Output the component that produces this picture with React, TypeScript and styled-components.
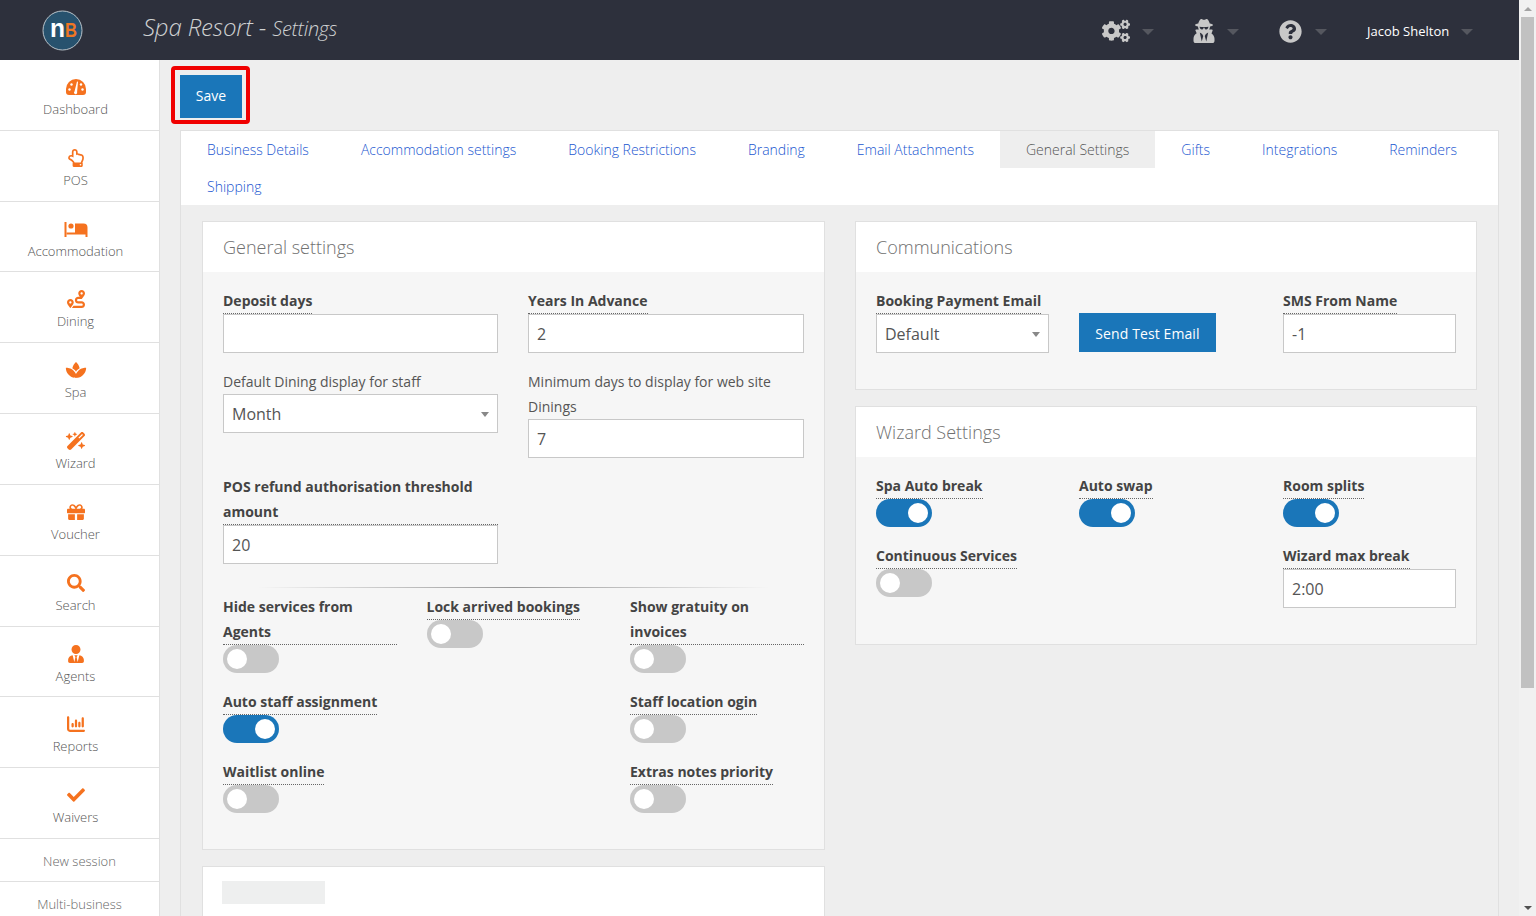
import styled, { createGlobalStyle } from "styled-components";
import type { ReactNode } from "react";
import {
  FaCheck,
  FaCogs,
  FaGift,
  FaQuestionCircle,
  FaRegHandPointUp,
  FaRoute,
  FaSearch,
  FaSpa,
  FaUserSecret,
  FaUserTie,
} from "react-icons/fa";
import { FaChartColumn, FaWandMagicSparkles } from "react-icons/fa6";

const GlobalStyle = createGlobalStyle`
  html, body {
    margin: 0;
    height: 100%;
    overflow: hidden;
  }
  body {
    font-family: "Open Sans", "Liberation Sans", sans-serif;
    color: #555;
    background: #eee;
  }
  * {
    box-sizing: border-box;
  }
`;

const Page = styled.div`
  display: flex;
  width: 1536px;
  height: 916px;
  overflow: hidden;
`;

const Viewport = styled.div`
  flex: 1;
  min-width: 0;
  display: flex;
  flex-direction: column;
`;

const Scrollbar = styled.div`
  width: 17px;
  display: flex;
  flex-direction: column;
  align-items: center;
  background: #f1f1f1;
`;

const ScrollArrow = styled.div<{ $down?: boolean }>`
  height: 17px;
  width: 100%;
  display: flex;
  align-items: center;
  justify-content: center;
  &::before {
    content: "";
    border-left: 4px solid transparent;
    border-right: 4px solid transparent;
    ${(p) =>
      p.$down ? "border-top: 4px solid #505050;" : "border-bottom: 4px solid #a3a3a3;"}
  }
`;

const ScrollThumb = styled.div`
  width: 13px;
  height: 671px;
  background: #c1c1c1;
`;

const ScrollGap = styled.div`
  flex: 1;
`;

const Header = styled.header`
  height: 60px;
  flex: none;
  display: flex;
  align-items: center;
  background: #2d303c;
`;

const LogoCell = styled.div`
  width: 143px;
  padding-left: 42px;
  display: flex;
  align-items: center;
`;

const Title = styled.div`
  margin-bottom: 8px;
  font-size: 24px;
  font-style: italic;
  font-weight: 300;
  letter-spacing: -0.15px;
  color: #cfd1d2;
  small {
    font-size: 20px;
    letter-spacing: -0.3px;
  }
`;

const HeaderTools = styled.div`
  margin-left: auto;
  padding-top: 2px;
  display: flex;
  align-items: center;
  color: #c8c8c8;
`;

const ToolButton = styled.div<{ $w: number }>`
  width: ${(p) => p.$w}px;
  display: flex;
  align-items: center;
`;

const CogIcon = styled(FaCogs)`
  margin-left: 1px;
`;

const ToolCaret = styled.span<{ $gap: number }>`
  margin-left: ${(p) => p.$gap}px;
  margin-top: 2px;
  border-left: 6px solid transparent;
  border-right: 6px solid transparent;
  border-top: 6px solid #55575f;
`;

const UserName = styled.span`
  font-size: 13px;
  color: #fff;
`;

const Body = styled.div`
  flex: 1;
  min-height: 0;
  display: flex;
`;

const Sidebar = styled.nav`
  width: 160px;
  flex: none;
  background: #fff;
  border-right: 1px solid #e0e0e0;
  overflow: hidden;
`;

const NavItem = styled.a`
  height: 70.83px;
  display: flex;
  flex-direction: column;
  align-items: center;
  padding: 18px 8px 0 0;
  border-bottom: 1px solid #e0e0e0;
  font-size: 13px;
  font-weight: 300;
  line-height: 17px;
  color: #555;
  svg {
    height: 18px;
    width: 24px;
    color: #f5721f;
    margin-bottom: 5px;
  }
`;

const NavPlain = styled.a`
  height: 43px;
  display: flex;
  align-items: center;
  justify-content: center;
  padding-top: 1px;
  border-bottom: 1px solid #e0e0e0;
  font-size: 13px;
  font-weight: 300;
  color: #666;
`;

const Main = styled.main`
  flex: 1;
  min-width: 0;
  display: flex;
  flex-direction: column;
  padding: 6px 20px 0 11px;
  background: #eee;
`;

const SaveHighlight = styled.div`
  width: 79px;
  height: 58px;
  border: 4px solid #f00000;
  border-radius: 4px;
  padding: 5px;
`;

const SaveButton = styled.button`
  width: 62px;
  height: 43px;
  padding: 0 0 2px;
  border: 0;
  background: #1a76b9;
  color: #fff;
  font: 14px "Open Sans", sans-serif;
`;

const Content = styled.div`
  flex: 1;
  min-height: 0;
  margin: 6px 0 0 9px;
  border: 1px solid #e0e0e0;
  border-bottom: 0;
  overflow: hidden;
`;

const Tabs = styled.div`
  display: flex;
  flex-wrap: wrap;
  background: #fff;
  height: 74px;
`;

const Tab = styled.a<{ $active?: boolean }>`
  height: 37px;
  padding: 0 26px;
  display: flex;
  align-items: center;
  font-size: 14px;
  font-weight: 300;
  color: ${(p) => (p.$active ? "#555" : "#1a56d0")};
  background: ${(p) => (p.$active ? "#eee" : "transparent")};
`;

const Columns = styled.div`
  display: grid;
  grid-template-columns: 623px 622px;
  column-gap: 30px;
  padding: 16px 0 0 21px;
`;

const Stack = styled.div`
  display: flex;
  flex-direction: column;
  gap: 16px;
`;

const Panel = styled.section<{ $h: number }>`
  height: ${(p) => p.$h}px;
  border: 1px solid #e0e0e0;
  background: #f6f6f6;
`;

const PanelHead = styled.h3`
  margin: 0;
  height: 50px;
  padding-left: 20px;
  display: flex;
  align-items: center;
  background: #fff;
  font-size: 18px;
  font-weight: 300;
  color: #707070;
`;

const PanelBody = styled.div`
  padding: 17px 20px 0;
`;

const FormGrid = styled.div`
  display: grid;
  grid-template-columns: 275px 276px;
  column-gap: 30px;
  align-items: start;
`;

const Field = styled.div<{ $mb?: number }>`
  margin-bottom: ${(p) => p.$mb ?? 16}px;
`;

const PlainLabel = styled.div`
  font-size: 14px;
  line-height: 25px;
  color: #555;
`;

const InlineLabel = styled.div<{ $full?: boolean }>`
  width: ${(p) => (p.$full ? "100%" : "fit-content")};
  margin-top: ${(p) => (p.$full ? "-1px" : "0")};
  font-size: 14px;
  font-weight: 700;
  line-height: ${(p) => (p.$full ? "25px" : "24px")};
  color: #444;
  border-bottom: 1px dotted #666;
`;

const WrapLabel = styled.div`
  font-size: 14px;
  font-weight: 700;
  line-height: 25px;
  color: #444;
  border-bottom: 1px dotted #666;
`;

const Input = styled.div`
  height: 39px;
  display: flex;
  align-items: center;
  padding: 1px 0 0 8px;
  background: #fff;
  border: 1px solid #c8c8c8;
  font-size: 16px;
  color: #555;
`;

const Select = styled(Input)`
  justify-content: space-between;
  padding-right: 8px;
  &::after {
    content: "";
    border-left: 4px solid transparent;
    border-right: 4px solid transparent;
    border-top: 5px solid #888;
  }
`;

const Divider = styled.div`
  height: 1px;
  background: linear-gradient(to right, transparent 6%, #999 50%, transparent 94%);
`;

const ToggleGrid = styled.div`
  display: grid;
  grid-template-columns: 174px 174px 174px;
  column-gap: 29.5px;
  margin-top: 7px;
`;

const ToggleField = styled.div<{ $col?: number }>`
  margin-bottom: 17px;
  ${(p) => (p.$col ? `grid-column: ${p.$col};` : "")}
`;

const Switch = styled.div<{ $on?: boolean }>`
  width: 56px;
  height: 28px;
  border-radius: 14px;
  padding: 4px;
  display: flex;
  justify-content: ${(p) => (p.$on ? "flex-end" : "flex-start")};
  background: ${(p) => (p.$on ? "#1a76b9" : "#c8c8c8")};
  &::after {
    content: "";
    width: 20px;
    height: 20px;
    border-radius: 50%;
    background: #fff;
  }
`;

const CommGrid = styled.div`
  display: grid;
  grid-template-columns: 173px 174px 173px;
  column-gap: 30px;
  align-items: start;
`;

const SendButton = styled.button`
  margin-top: 24px;
  width: 137px;
  height: 39px;
  border: 0;
  padding: 2px 0 0;
  background: #1a76b9;
  color: #fff;
  font: 14px "Open Sans", sans-serif;
  letter-spacing: 0.1px;
`;

const BottomPanel = styled.section`
  height: 120px;
  padding: 14px 0 0 19px;
  border: 1px solid #e0e0e0;
  background: #fff;
`;

const Placeholder = styled.div`
  width: 103px;
  height: 23px;
  background: #eeefef;
`;

function Logo() {
  return (
    <svg width="41" height="41" viewBox="0 0 41 41" aria-label="nB logo">
      <circle cx="20.5" cy="20.5" r="19.5" fill="#27526e" stroke="#b9c3ca" strokeWidth="1" />
      <text
        x="8"
        y="27"
        fontFamily="Liberation Sans, sans-serif"
        fontWeight="700"
        fontSize="26"
        fill="#fff"
        textLength="15"
        lengthAdjust="spacingAndGlyphs"
      >
        n
      </text>
      <text
        x="23"
        y="27"
        fontFamily="Liberation Sans, sans-serif"
        fontWeight="700"
        fontSize="20"
        fill="#ee7623"
        textLength="12"
        lengthAdjust="spacingAndGlyphs"
      >
        B
      </text>
    </svg>
  );
}

function GaugeIcon() {
  return (
    <svg viewBox="0 0 24 18" fill="currentColor">
      <path d="M12 1a10 10 0 0 1 10 10v3a3 3 0 0 1-3 3H5a3 3 0 0 1-3-3v-3A10 10 0 0 1 12 1z" />
      <g fill="#fff">
        <circle cx="5.5" cy="11.5" r="1.2" />
        <circle cx="7.5" cy="6.5" r="1.2" />
        <circle cx="18.5" cy="11.5" r="1.2" />
        <circle cx="17" cy="6.5" r="1.2" />
        <path d="M13 3.5l1 .2-.9 10.3a1.6 1.6 0 1 1-2.6-.6z" />
      </g>
    </svg>
  );
}

function BedIcon() {
  return (
    <svg viewBox="0 0 24 18" fill="currentColor">
      <rect x="0.5" y="2" width="2" height="15" />
      <circle cx="7" cy="6" r="2.6" />
      <path d="M11 3.5h8.5a4 4 0 0 1 4 4V17h-2v-2.5h-19v-2H11z" />
    </svg>
  );
}

const navItems: [string, ReactNode][] = [
  ["Dashboard", <GaugeIcon />],
  ["POS", <FaRegHandPointUp />],
  ["Accommodation", <BedIcon />],
  ["Dining", <FaRoute />],
  ["Spa", <FaSpa />],
  ["Wizard", <FaWandMagicSparkles />],
  ["Voucher", <FaGift />],
  ["Search", <FaSearch />],
  ["Agents", <FaUserTie />],
  ["Reports", <FaChartColumn />],
  ["Waivers", <FaCheck />],
];

const tabs = [
  "Business Details",
  "Accommodation settings",
  "Booking Restrictions",
  "Branding",
  "Email Attachments",
  "General Settings",
  "Gifts",
  "Integrations",
  "Reminders",
  "Shipping",
];

export default function App() {
  return (
    <Page>
      <GlobalStyle />
      <Viewport>
        <Header>
          <LogoCell>
            <Logo />
          </LogoCell>
          <Title>
            Spa Resort - <small>Settings</small>
          </Title>
          <HeaderTools>
            <ToolButton $w={91}>
              <CogIcon size={28} />
              <ToolCaret $gap={12} />
            </ToolButton>
            <ToolButton $w={87}>
              <FaUserSecret size={24} />
              <ToolCaret $gap={11} />
            </ToolButton>
            <ToolButton $w={88}>
              <FaQuestionCircle size={23} />
              <ToolCaret $gap={13} />
            </ToolButton>
            <ToolButton $w={152}>
              <UserName>Jacob Shelton</UserName>
              <ToolCaret $gap={12} />
            </ToolButton>
          </HeaderTools>
        </Header>
        <Body>
          <Sidebar>
            {navItems.map(([label, icon]) => (
              <NavItem key={label}>
                {icon}
                {label}
              </NavItem>
            ))}
            <NavPlain>New session</NavPlain>
            <NavPlain>Multi-business</NavPlain>
          </Sidebar>
          <Main>
            <SaveHighlight>
              <SaveButton>Save</SaveButton>
            </SaveHighlight>
            <Content>
              <Tabs>
                {tabs.map((t) => (
                  <Tab key={t} $active={t === "General Settings"}>
                    {t}
                  </Tab>
                ))}
              </Tabs>
              <Columns>
                <Stack>
                  <Panel $h={629}>
                    <PanelHead>General settings</PanelHead>
                    <PanelBody>
                      <FormGrid>
                        <div>
                          <Field>
                            <InlineLabel>Deposit days</InlineLabel>
                            <Input />
                          </Field>
                          <Field>
                            <PlainLabel>Default Dining display for staff</PlainLabel>
                            <Select>Month</Select>
                          </Field>
                        </div>
                        <div>
                          <Field>
                            <InlineLabel>Years In Advance</InlineLabel>
                            <Input>2</Input>
                          </Field>
                          <Field>
                            <PlainLabel>Minimum days to display for web site Dinings</PlainLabel>
                            <Input>7</Input>
                          </Field>
                        </div>
                      </FormGrid>
                      <FormGrid>
                        <Field $mb={23}>
                          <WrapLabel>POS refund authorisation threshold amount</WrapLabel>
                          <Input>20</Input>
                        </Field>
                      </FormGrid>
                      <Divider />
                      <ToggleGrid>
                        <ToggleField>
                          <InlineLabel $full>Hide services from Agents</InlineLabel>
                          <Switch />
                        </ToggleField>
                        <ToggleField>
                          <InlineLabel>Lock arrived bookings</InlineLabel>
                          <Switch />
                        </ToggleField>
                        <ToggleField>
                          <InlineLabel $full>Show gratuity on invoices</InlineLabel>
                          <Switch />
                        </ToggleField>
                        <ToggleField>
                          <InlineLabel>Auto staff assignment</InlineLabel>
                          <Switch $on />
                        </ToggleField>
                        <ToggleField $col={3}>
                          <InlineLabel>Staff location ogin</InlineLabel>
                          <Switch />
                        </ToggleField>
                        <ToggleField>
                          <InlineLabel>Waitlist online</InlineLabel>
                          <Switch />
                        </ToggleField>
                        <ToggleField $col={3}>
                          <InlineLabel>Extras notes priority</InlineLabel>
                          <Switch />
                        </ToggleField>
                      </ToggleGrid>
                    </PanelBody>
                  </Panel>
                  <BottomPanel>
                    <Placeholder />
                  </BottomPanel>
                </Stack>
                <Stack>
                  <Panel $h={169}>
                    <PanelHead>Communications</PanelHead>
                    <PanelBody>
                      <CommGrid>
                        <div>
                          <InlineLabel>Booking Payment Email</InlineLabel>
                          <Select>Default</Select>
                        </div>
                        <SendButton>Send Test Email</SendButton>
                        <div>
                          <InlineLabel>SMS From Name</InlineLabel>
                          <Input>-1</Input>
                        </div>
                      </CommGrid>
                    </PanelBody>
                  </Panel>
                  <Panel $h={239}>
                    <PanelHead>Wizard Settings</PanelHead>
                    <PanelBody>
                      <CommGrid>
                        <ToggleField>
                          <InlineLabel>Spa Auto break</InlineLabel>
                          <Switch $on />
                        </ToggleField>
                        <ToggleField>
                          <InlineLabel>Auto swap</InlineLabel>
                          <Switch $on />
                        </ToggleField>
                        <ToggleField>
                          <InlineLabel>Room splits</InlineLabel>
                          <Switch $on />
                        </ToggleField>
                        <ToggleField>
                          <InlineLabel>Continuous Services</InlineLabel>
                          <Switch />
                        </ToggleField>
                        <ToggleField $col={3}>
                          <InlineLabel>Wizard max break</InlineLabel>
                          <Input>2:00</Input>
                        </ToggleField>
                      </CommGrid>
                    </PanelBody>
                  </Panel>
                </Stack>
              </Columns>
            </Content>
          </Main>
        </Body>
      </Viewport>
      <Scrollbar>
        <ScrollArrow />
        <ScrollThumb />
        <ScrollGap />
        <ScrollArrow $down />
      </Scrollbar>
    </Page>
  );
}
